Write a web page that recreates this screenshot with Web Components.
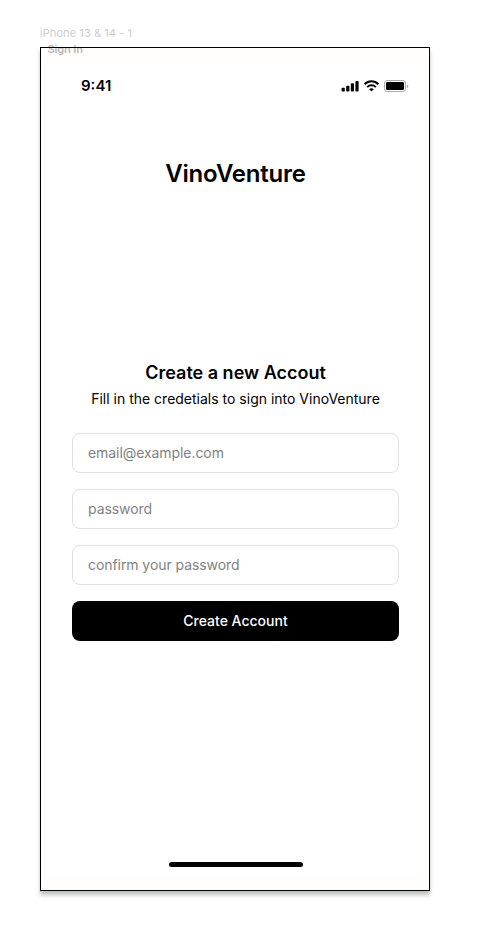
<!DOCTYPE html>
<html lang="en">
<head>
<meta charset="utf-8">
<title>VinoVenture</title>
<style>
html,body{margin:0;background:#fff;height:947px;overflow:hidden}
body{font-family:Inter,"Liberation Sans",sans-serif;color:#000}
</style>
</head>
<body>
<design-canvas label="iPhone 13 &amp; 14 - 1">
  <phone-frame label="Sign In">
    <status-bar time="9:41"></status-bar>
    <app-title>VinoVenture</app-title>
    <sign-form>
      <form-heading heading="Create a new Accout">Fill in the credetials to sign into VinoVenture</form-heading>
      <text-field>email@example.com</text-field>
      <text-field>password</text-field>
      <text-field>confirm your password</text-field>
      <primary-button>Create Account</primary-button>
    </sign-form>
    <home-indicator></home-indicator>
  </phone-frame>
</design-canvas>
<script>
const define = (name, html) => customElements.define(name, class extends HTMLElement {
  constructor() {
    super();
    this.attachShadow({ mode: "open" }).innerHTML = html;
  }
  connectedCallback() {
    this.shadowRoot.querySelectorAll("[data-attr]").forEach(el => {
      el.textContent = this.getAttribute(el.dataset.attr);
    });
  }
});

define("design-canvas", `
<style>
:host{display:block;padding:26px 49px 0 40px}
.label{height:21px;line-height:14px;font-size:11px;letter-spacing:.08px;color:#ccc;white-space:nowrap}
</style>
<div class="label" data-attr="label"></div><slot></slot>`);

define("phone-frame", `
<style>
:host{display:flex;flex-direction:column;box-sizing:border-box;width:390px;height:844px;position:relative;
border:1px solid #000;background:linear-gradient(#fff,#fff) 6px 15px/376px 812px no-repeat #fffefc;
box-shadow:0 4px 4px rgba(0,0,0,.25)}
.label{position:absolute;left:6.5px;top:-6px;font-size:11px;line-height:14px;font-weight:600;letter-spacing:-.12px;color:#b9b9b6}
.edge{position:absolute;left:-1px;right:-1px;top:-1px;height:1px;background:#000}
</style>
<div class="label" data-attr="label"></div><div class="edge"></div><slot></slot>`);

define("status-bar", `
<style>
:host{display:flex;justify-content:space-between;align-items:center;height:20px;margin-top:28px;padding:0 20px 0 40px}
.time{font-size:15px;font-weight:600;line-height:20px}
svg{display:block}
</style>
<div class="time" data-attr="time"></div>
<svg width="68" height="14" viewBox="0 0 68 14">
  <rect x="0.6" y="8.7" width="3.2" height="3.8" rx=".8"/>
  <rect x="5.2" y="6.8" width="3.2" height="5.7" rx=".8"/>
  <rect x="9.8" y="4.3" width="3.2" height="8.2" rx=".8"/>
  <rect x="14.4" y="2" width="3.2" height="10.5" rx=".8"/>
  <g fill="none" stroke="#000" stroke-width="2">
    <path d="M23.6 5.2a9.8 9.8 0 0 1 13.8 0"/>
    <path d="M26.2 8.1a6.1 6.1 0 0 1 8.6 0"/>
  </g>
  <path d="M28.2 10.2a3.4 3.4 0 0 1 4.6 0L30.5 12.6z"/>
  <rect x="43.5" y="1.5" width="21" height="11" rx="2.6" fill="none" stroke="#aaa"/>
  <rect x="45" y="3" width="18" height="8" rx="1.3"/>
  <path d="M66 5.4q1.3.6 1.3 1.8T66 9z" fill="#aaa"/>
</svg>`);

define("app-title", `
<style>
:host{display:block;text-align:center;font-size:24px;font-weight:600;line-height:36px;letter-spacing:-.24px;margin-top:60px;padding-left:1px}
</style>
<slot></slot>`);

define("sign-form", `
<style>
:host{display:flex;flex-direction:column;gap:16px;margin:167px 30px 0 31px}
</style>
<slot></slot>`);

define("form-heading", `
<style>
:host{display:flex;flex-direction:column;align-items:center;margin-bottom:8px;white-space:nowrap}
.h{font-size:18px;font-weight:600;line-height:27px}
.p{font-size:14px;line-height:21px;margin-top:2px}
</style>
<div class="h" data-attr="heading"></div><div class="p"><slot></slot></div>`);

define("text-field", `
<style>
:host{display:flex;align-items:center;box-sizing:border-box;height:40px;padding:0 15px 2px;border:1px solid #e0e0e0;border-radius:8px;font-size:14px;letter-spacing:-.07px;color:#828282;background:#fff}
</style>
<slot></slot>`);

define("primary-button", `
<style>
:host{display:flex;align-items:center;justify-content:center;box-sizing:border-box;height:40px;padding-bottom:2px;border-radius:8px;background:#000;color:#fff;font-size:14px;font-weight:500}
</style>
<slot></slot>`);

define("home-indicator", `
<style>
:host{display:block;width:134px;height:5px;border-radius:3px;background:#000;margin:auto auto 23px 128px}
</style>`);
</script>
</body>
</html>
